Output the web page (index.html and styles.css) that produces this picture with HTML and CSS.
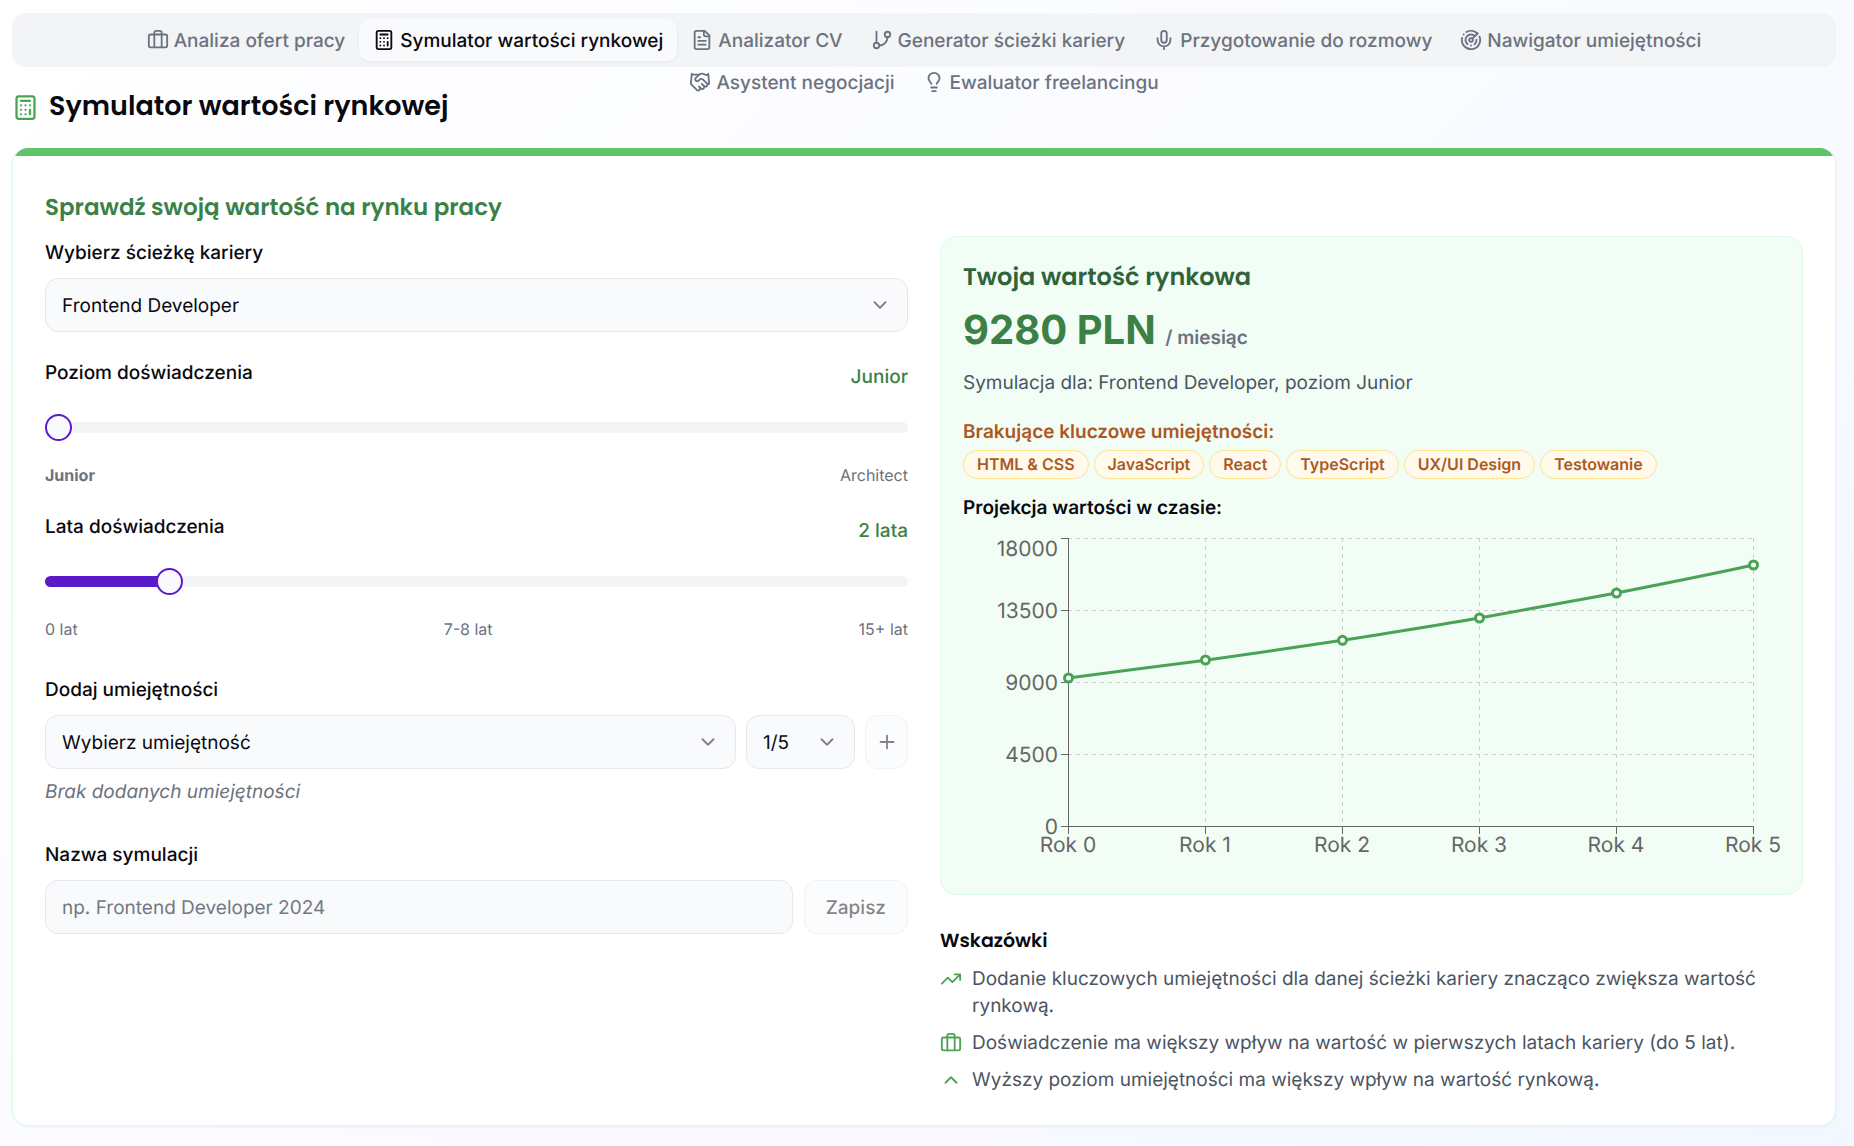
FILE: index.html
```html
<!DOCTYPE html>
<html lang="pl">
<head>
<meta charset="utf-8">
<meta name="viewport" content="width=device-width, initial-scale=1">
<title>Symulator wartości rynkowej</title>
<link rel="stylesheet" href="styles.css">
</head>
<body>
<svg class="sprite" aria-hidden="true">
  <symbol id="i-briefcase" viewBox="0 0 24 24"><path d="M16 20V4a2 2 0 0 0-2-2h-4a2 2 0 0 0-2 2v16"/><rect x="2" y="6" width="20" height="14" rx="2"/></symbol>
  <symbol id="i-calculator" viewBox="0 0 24 24"><rect x="4" y="2" width="16" height="20" rx="2"/><path d="M8 6h8M16 14v4M16 10h.01M12 10h.01M8 10h.01M12 14h.01M8 14h.01M12 18h.01M8 18h.01"/></symbol>
  <symbol id="i-file" viewBox="0 0 24 24"><path d="M15 2H6a2 2 0 0 0-2 2v16a2 2 0 0 0 2 2h12a2 2 0 0 0 2-2V7Z"/><path d="M14 2v4a2 2 0 0 0 2 2h4M10 9H8M16 13H8M16 17H8"/></symbol>
  <symbol id="i-branch" viewBox="0 0 24 24"><path d="M6 3v12"/><circle cx="18" cy="6" r="3"/><circle cx="6" cy="18" r="3"/><path d="M18 9a9 9 0 0 1-9 9"/></symbol>
  <symbol id="i-mic" viewBox="0 0 24 24"><path d="M12 2a3 3 0 0 0-3 3v7a3 3 0 0 0 6 0V5a3 3 0 0 0-3-3Z"/><path d="M19 10v2a7 7 0 0 1-14 0v-2M12 19v3"/></symbol>
  <symbol id="i-radar" viewBox="0 0 24 24"><path d="M19.07 4.93A10 10 0 0 0 6.99 3.34M4 6h.01M2.29 9.62A10 10 0 1 0 21.31 8.35M16.24 7.76A6 6 0 1 0 8.23 16.67M12 18h.01M17.99 11.66A6 6 0 0 1 15.77 16.67"/><circle cx="12" cy="12" r="2"/><path d="m13.41 10.59 5.66-5.66"/></symbol>
  <symbol id="i-handshake" viewBox="0 0 24 24"><path d="m11 17 2 2a1 1 0 1 0 3-3"/><path d="m14 14 2.5 2.5a1 1 0 1 0 3-3l-3.88-3.88a3 3 0 0 0-4.24 0l-.88.88a1 1 0 1 1-3-3l2.81-2.81a5.79 5.79 0 0 1 7.06-.87l.47.28a2 2 0 0 0 1.42.25L21 4"/><path d="m21 3 1 11h-2M3 3 2 14l6.5 6.5a1 1 0 1 0 3-3M3 4h8"/></symbol>
  <symbol id="i-bulb" viewBox="0 0 24 24"><path d="M15 14c.2-1 .7-1.7 1.5-2.5 1-.9 1.5-2.2 1.5-3.5A6 6 0 0 0 6 8c0 1 .2 2.2 1.5 3.5.7.7 1.3 1.5 1.5 2.5M9 18h6M10 22h4"/></symbol>
  <symbol id="i-trend" viewBox="0 0 24 24"><path d="M22 7 13.5 15.5 8.5 10.5 2 17M16 7h6v6"/></symbol>
  <symbol id="i-up" viewBox="0 0 24 24"><path d="m18 15-6-6-6 6"/></symbol>
  <symbol id="i-down" viewBox="0 0 24 24"><path d="m6 9 6 6 6-6"/></symbol>
  <symbol id="i-plus" viewBox="0 0 24 24"><path d="M5 12h14M12 5v14"/></symbol>
</svg>

<nav class="tabs" role="tablist" aria-label="Narzędzia kariery">
  <button class="tab" role="tab"><svg class="icon"><use href="#i-briefcase"/></svg>Analiza ofert pracy</button>
  <button class="tab tab-active" role="tab" aria-selected="true"><svg class="icon"><use href="#i-calculator"/></svg>Symulator wartości rynkowej</button>
  <button class="tab" role="tab"><svg class="icon"><use href="#i-file"/></svg>Analizator CV</button>
  <button class="tab" role="tab"><svg class="icon"><use href="#i-branch"/></svg>Generator ścieżki kariery</button>
  <button class="tab" role="tab"><svg class="icon"><use href="#i-mic"/></svg>Przygotowanie do rozmowy</button>
  <button class="tab" role="tab"><svg class="icon"><use href="#i-radar"/></svg>Nawigator umiejętności</button>
  <button class="tab" role="tab"><svg class="icon"><use href="#i-handshake"/></svg>Asystent negocjacji</button>
  <button class="tab" role="tab"><svg class="icon"><use href="#i-bulb"/></svg>Ewaluator freelancingu</button>
</nav>

<header class="page-head">
  <svg class="icon icon-lg"><use href="#i-calculator"/></svg>
  <h1 class="page-title">Symulator wartości rynkowej</h1>
</header>

<main class="card">
  <div class="card-bar"></div>
  <div class="card-body">
    <h2 class="card-title">Sprawdź swoją wartość na rynku pracy</h2>
    <div class="columns">
      <form class="form">
        <div class="field">
          <label class="label" for="career">Wybierz ścieżkę kariery</label>
          <div class="select">
            <select class="control" id="career"><option>Frontend Developer</option></select>
            <svg class="icon select-icon"><use href="#i-down"/></svg>
          </div>
        </div>

        <div class="slider">
          <div class="slider-head"><label for="level">Poziom doświadczenia</label><output class="value" for="level">Junior</output></div>
          <input class="range" id="level" type="range" min="0" max="5" value="0" style="--fill: 0%">
          <div class="scale"><strong>Junior</strong><span>Architect</span></div>
        </div>

        <div class="slider">
          <div class="slider-head"><label for="years">Lata doświadczenia</label><output class="value" for="years">2 lata</output></div>
          <input class="range" id="years" type="range" min="0" max="15" value="2" style="--fill: 14%">
          <div class="scale"><span>0 lat</span><span>7-8 lat</span><span>15+ lat</span></div>
        </div>

        <div class="field field-spaced">
          <label class="label" for="skill">Dodaj umiejętności</label>
          <div class="row">
            <div class="select select-grow">
              <select class="control" id="skill"><option>Wybierz umiejętność</option></select>
              <svg class="icon select-icon"><use href="#i-down"/></svg>
            </div>
            <div class="select select-rate">
              <select class="control" aria-label="Poziom umiejętności"><option>1/5</option></select>
              <svg class="icon select-icon"><use href="#i-down"/></svg>
            </div>
            <button class="btn btn-icon" type="button" disabled aria-label="Dodaj"><svg class="icon"><use href="#i-plus"/></svg></button>
          </div>
          <p class="empty">Brak dodanych umiejętności</p>
        </div>

        <div class="field field-spaced">
          <label class="label" for="name">Nazwa symulacji</label>
          <div class="row row-wide">
            <input class="control" id="name" type="text" placeholder="np. Frontend Developer 2024">
            <button class="btn" type="button" disabled>Zapisz</button>
          </div>
        </div>
      </form>

      <div class="side">
        <section class="result">
          <h3 class="result-title">Twoja wartość rynkowa</h3>
          <p class="price">9280 PLN <span class="per">/ miesiąc</span></p>
          <p class="summary">Symulacja dla: Frontend Developer, poziom Junior</p>
          <h4 class="missing">Brakujące kluczowe umiejętności:</h4>
          <ul class="badges">
            <li class="badge">HTML &amp; CSS</li>
            <li class="badge">JavaScript</li>
            <li class="badge">React</li>
            <li class="badge">TypeScript</li>
            <li class="badge">UX/UI Design</li>
            <li class="badge">Testowanie</li>
          </ul>
          <h4 class="projection">Projekcja wartości w czasie:</h4>
          <svg class="chart" viewBox="0 0 817 340" role="img" aria-label="Projekcja wartości w czasie">
            <g class="grid">
              <path d="M105 6.500H790.500M105 78.500H790.500M105 150.500H790.500M105 222.500H790.500"/>
              <path d="M242.500 6V294M379.500 6V294M516.500 6V294M653.500 6V294M790.500 6V294"/>
            </g>
            <path class="axis" d="M105.500 6V295M105 294.500H791M98 6.500h8M98 78.500h8M98 150.500h8M98 222.500h8M98 294.500h8M105.500 294v8M242.500 294v8M379.500 294v8M516.500 294v8M653.500 294v8M790.500 294v8"/>
            <g class="ticks ticks-y">
              <text x="95" y="24">18000</text><text x="95" y="86">13500</text><text x="95" y="158">9000</text><text x="95" y="230">4500</text><text x="95" y="302">0</text>
            </g>
            <g class="ticks ticks-x">
              <text x="105" y="320">Rok 0</text><text x="242" y="320">Rok 1</text><text x="379" y="320">Rok 2</text><text x="516" y="320">Rok 3</text><text x="653" y="320">Rok 4</text><text x="790" y="320">Rok 5</text>
            </g>
            <g class="series">
              <path d="M105.500 146C151 140 197 134 242.500 128.200C288 122 334 115 379.500 108.300C425 101 471 94 516.500 86C562 78 608 69 653.500 61C699 52 745 43 790.500 33"/>
              <circle cx="105.500" cy="146" r="4"/><circle cx="242.500" cy="128" r="4"/><circle cx="379.500" cy="108.300" r="4"/><circle cx="516.500" cy="86" r="4"/><circle cx="653.500" cy="61" r="4"/><circle cx="790.500" cy="33" r="4"/>
            </g>
          </svg>
        </section>

        <section class="tips">
          <h4 class="tips-title">Wskazówki</h4>
          <ul class="tips-list">
            <li class="tip"><svg class="icon"><use href="#i-trend"/></svg><span>Dodanie kluczowych umiejętności dla danej ścieżki kariery znacząco zwiększa wartość rynkową.</span></li>
            <li class="tip"><svg class="icon"><use href="#i-briefcase"/></svg><span>Doświadczenie ma większy wpływ na wartość w pierwszych latach kariery (do 5 lat).</span></li>
            <li class="tip"><svg class="icon"><use href="#i-up"/></svg><span>Wyższy poziom umiejętności ma większy wpływ na wartość rynkową.</span></li>
          </ul>
        </section>
      </div>
    </div>
  </div>
</main>
</body>
</html>
```
FILE: styles.css
```css
*, *::before, *::after { box-sizing: border-box; }

html { min-height: 100%; background: linear-gradient(135deg, #ffffff 0%, #fafbff 50%, #f3f7ff 100%); }

body {
  margin: 0;
  padding: 13px 18px 20px 12px;
  font-family: Inter, "Noto Sans", sans-serif;
  font-size: 19px;
  line-height: 27px;
  text-rendering: geometricPrecision;
  color: #09090f;
}

h1, h2, h3, h4, p, ul { margin: 0; padding: 0; }
ul { list-style: none; }
button, input, select { font: inherit; color: inherit; text-rendering: inherit; }

.sprite { display: none; }

.icon {
  width: 22px;
  height: 22px;
  flex: none;
  fill: none;
  stroke: currentColor;
  stroke-width: 2;
  stroke-linecap: round;
  stroke-linejoin: round;
}

.icon-lg { width: 27px; height: 27px; color: #4aa354; }

/* Tabs: the bar keeps one row's height, further rows spill below it */
.tabs {
  display: flex;
  flex-wrap: wrap;
  justify-content: center;
  align-content: flex-start;
  height: 54px;
  padding: 6px;
  border-radius: 14px;
  background: #f3f4f6;
  color: #6b7280;
}

.tab {
  display: flex;
  align-items: center;
  gap: 5px;
  height: 42px;
  padding: 0 14px;
  border: 0;
  border-radius: 10px;
  background: transparent;
  font-weight: 500;
}

.tab-active {
  background: #f9fafc;
  color: #09090f;
  box-shadow: 0 1px 3px rgba(0, 0, 0, 0.06);
}

.page-head {
  display: flex;
  align-items: center;
  gap: 10px;
  margin: 21px 0 22px;
}

.page-title { font: 600 27px/38px Poppins, Inter, sans-serif; }

.card {
  overflow: hidden;
  border: 1px solid #dcfce7;
  border-top: 0;
  border-radius: 16px;
  background: #fff;
  box-shadow: 0 1px 3px rgba(0, 0, 0, 0.06);
}

.card-bar { height: 8px; background: #5fc46a; }
.card-body { padding: 32px; }
.card-title { margin-bottom: 8px; font: 600 23px/40px Poppins, Inter, sans-serif; color: #3b8145; }

.columns { display: grid; grid-template-columns: 1fr 1fr; gap: 32px; }

.form { display: flex; flex-direction: column; gap: 27px; font-weight: 500; }
.field { display: flex; flex-direction: column; gap: 9px; }
.field-spaced { margin-top: 6px; }
.label { line-height: 33px; }

.control {
  width: 100%;
  height: 54px;
  padding: 0 16px;
  border: 1px solid #e5e7eb;
  border-radius: 13px;
  background: #f9fafc;
  font-weight: 400;
  appearance: none;
}
.control::placeholder { color: #737884; opacity: 1; }

.select { display: grid; align-items: center; }
.select > * { grid-area: 1 / 1; }
.select-icon { justify-self: end; margin-right: 17px; color: #808086; pointer-events: none; }
.select-grow { flex: 1; }
.select-rate { width: 109px; }

.row { display: flex; gap: 10px; }
.row-wide { gap: 11px; }

.btn {
  flex: none;
  height: 54px;
  padding: 0 21px;
  border: 1px solid #e5e7eb;
  border-radius: 13px;
  background: #f9fafc;
  color: #09090f;
  font-weight: 500;
  opacity: 0.5;
}
.btn-icon { display: grid; place-items: center; width: 43px; padding: 0; }

.slider-head { display: flex; justify-content: space-between; height: 31px; }
.value { align-self: flex-end; color: #3b8145; }

.range {
  display: block;
  width: 100%;
  height: 27px;
  margin: 24px 0 23px;
  background: transparent;
  appearance: none;
}
.range::-webkit-slider-runnable-track {
  height: 11px;
  border-radius: 6px;
  background: linear-gradient(to right, #5b1ac9 var(--fill), #f3f4f6 var(--fill));
}
.range::-webkit-slider-thumb {
  width: 27px;
  height: 27px;
  margin-top: -8px;
  border: 2px solid #5b1ac9;
  border-radius: 50%;
  background: #f9fafc;
  appearance: none;
}

.scale {
  display: flex;
  justify-content: space-between;
  font-size: 16px;
  line-height: 22px;
  font-weight: 400;
  color: #6b7280;
}
.scale strong { font-weight: 700; }

.empty { font-weight: 400; font-style: italic; color: #6b7280; }

.side { display: flex; flex-direction: column; gap: 32px; }

.result {
  padding: 22px;
  border: 1px solid #dcfce7;
  border-radius: 16px;
  background: #f2fdf5;
}
.result-title { font: 600 24px/38px Poppins, Inter, sans-serif; color: #306339; }
.price { margin: 9px 0 15px; font-size: 40px; line-height: 48px; font-weight: 700; color: #3b8145; }
.per { font-size: 19px; line-height: 27px; font-weight: 600; color: #6b7280; }
.summary { margin-bottom: 22px; color: #4b5563; }
.missing { font-size: 19px; font-weight: 600; color: #ad5824; }
.projection { font-size: 19px; font-weight: 600; }

.badges { display: flex; flex-wrap: wrap; gap: 5px; margin: 5px 0 15px; }
.badge {
  padding: 0 13px;
  border: 1px solid #fbe58f;
  border-radius: 15px;
  background: #fffaeb;
  color: #ad5824;
  font-size: 16px;
  line-height: 27px;
  font-weight: 600;
}

.chart { display: block; width: 100%; height: auto; margin-top: 11px; overflow: visible; }
.grid { fill: none; stroke: #ccc; stroke-dasharray: 4 4; }
.axis { fill: none; stroke: #666; }
.ticks { font-size: 21px; fill: #666; }
.ticks-y { text-anchor: end; }
.ticks-x { text-anchor: middle; }
.series path { fill: none; stroke: #4aa354; stroke-width: 3; }
.series circle { fill: #fff; stroke: #4aa354; stroke-width: 3; }

.tips-title { margin-bottom: 11px; font: 600 19px/27px Poppins, Inter, sans-serif; }
.tips-list { display: flex; flex-direction: column; gap: 10px; }
.tip { display: flex; gap: 10px; color: #4b5563; }
.tip .icon { margin-top: 3px; color: #4aa354; }
```
